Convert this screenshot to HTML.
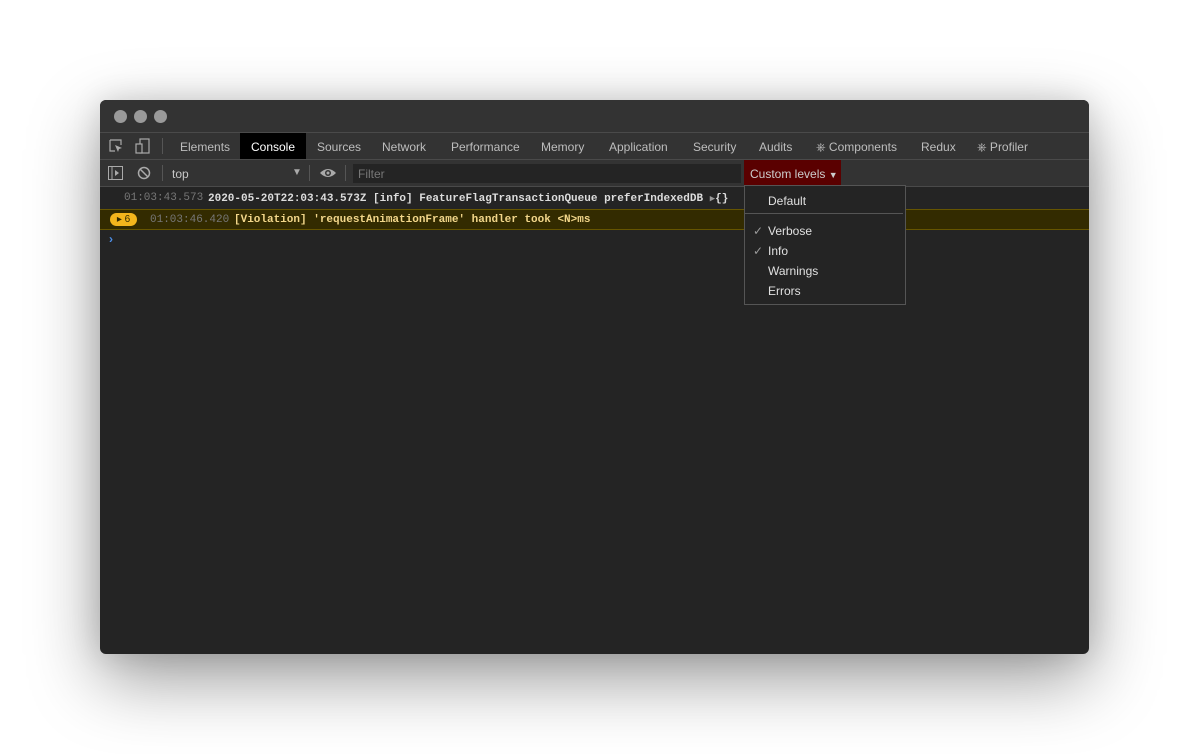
<!DOCTYPE html>
<html><head><style>
body{margin:0;width:1189px;height:754px;background:#fff;overflow:hidden;font-family:"Liberation Sans",sans-serif;}
.win{position:absolute;left:100px;top:100px;width:989px;height:554px;background:#242424;border-radius:6px;overflow:hidden;box-shadow:0 25px 70px rgba(0,0,0,.4),0 0 30px rgba(0,0,0,.12);}
.title{height:32px;background:#333;position:relative;border-bottom:1px solid #4a4a4a}
.dot{position:absolute;top:10px;width:13px;height:13px;border-radius:50%;background:#9a9a9a}
.tabs{height:26px;background:#333;border-bottom:1px solid #4a4a4a;position:relative;font-size:12px;color:#bdbdbd}
.tab{position:absolute;top:1px;height:26px;line-height:26px}
.tb{height:26px;background:#333;border-bottom:1px solid #4a4a4a;position:relative;font-size:12px;color:#c8c8c8}
.mono{font-family:"Liberation Mono",monospace;font-size:11px;position:absolute;white-space:pre}
.menu{position:absolute;left:644px;top:85px;width:160px;height:118px;background:#242424;border:1px solid #555;font-size:12px;color:#e0e0e0}
.menu div{position:absolute;left:23px}
.ck{position:absolute;left:8px!important;color:#999}
</style></head><body>
<div class="win">
 <div class="title"><div class="dot" style="left:14px"></div><div class="dot" style="left:34px"></div><div class="dot" style="left:54px"></div></div>
 <div class="tabs">
  <svg style="position:absolute;left:9px;top:6px" width="14" height="14"><path d="M1 1h11v5M1 1v11h5" stroke="#aaa" fill="none" stroke-width="1.2"/><path d="M6 6l7 3-3 1-1 3z" fill="#aaa"/></svg>
  <svg style="position:absolute;left:35px;top:5px" width="16" height="16"><rect x="5" y="1" width="9" height="14" stroke="#aaa" fill="none" stroke-width="1.2"/><rect x="1" y="6" width="6" height="9" stroke="#aaa" fill="#333" stroke-width="1.2"/></svg>
  <div style="position:absolute;left:62px;top:5px;width:1px;height:16px;background:#555"></div>
  <div class="tab" style="left:80px">Elements</div>
  <div class="tab" style="left:140px;top:0;width:66px;background:#000;color:#fff;text-align:center;line-height:28px">Console</div>
  <div class="tab" style="left:217px">Sources</div>
  <div class="tab" style="left:282px">Network</div>
  <div class="tab" style="left:351px">Performance</div>
  <div class="tab" style="left:441px">Memory</div>
  <div class="tab" style="left:509px">Application</div>
  <div class="tab" style="left:593px">Security</div>
  <div class="tab" style="left:659px">Audits</div>
  <div class="tab" style="left:716px">⎈ Components</div>
  <div class="tab" style="left:821px">Redux</div>
  <div class="tab" style="left:877px">⎈ Profiler</div>
 </div>
 <div class="tb">
  <svg style="position:absolute;left:8px;top:6px" width="15" height="14"><rect x=".5" y=".5" width="14" height="13" stroke="#aaa" fill="none"/><path d="M4 1v12" stroke="#aaa"/><path d="M7 4l4 3-4 3z" fill="#aaa"/></svg>
  <svg style="position:absolute;left:37px;top:6px" width="14" height="14"><circle cx="7" cy="7" r="5.5" stroke="#aaa" fill="none" stroke-width="1.5"/><path d="M3 3l8 8" stroke="#aaa" stroke-width="1.5"/></svg>
  <div style="position:absolute;left:62px;top:5px;width:1px;height:16px;background:#555"></div>
  <div style="position:absolute;left:72px;top:7px">top</div>
  <div style="position:absolute;left:192px;top:7px;font-size:10px;color:#aaa">▼</div>
  <div style="position:absolute;left:209px;top:5px;width:1px;height:16px;background:#555"></div>
  <svg style="position:absolute;left:219px;top:7px" width="18" height="12"><path d="M1 6Q9-2 17 6Q9 14 1 6z" fill="#aaa"/><circle cx="9" cy="6" r="3" fill="#333"/><circle cx="9" cy="6" r="1.5" fill="#aaa"/></svg>
  <div style="position:absolute;left:245px;top:5px;width:1px;height:16px;background:#555"></div>
  <div style="position:absolute;left:253px;top:4px;width:388px;height:19px;background:#242424;color:#777;line-height:21px;padding-left:5px;box-sizing:border-box">Filter</div>
  <div style="position:absolute;left:644px;top:0;width:97px;height:26px;background:#5a0000;color:#ccc;line-height:28px;padding-left:6px;box-sizing:border-box">Custom levels <span style="font-size:9px">▼</span></div>
 </div>
 <div class="mono" style="left:24px;top:92px;color:#777">01:03:43.573</div>
 <div class="mono" style="left:108px;top:93px;color:#ddd;font-weight:bold">2020-05-20T22:03:43.573Z [info] FeatureFlagTransactionQueue preferIndexedDB <span style="color:#999;font-size:9px">▶</span>{}</div>
 <div style="position:absolute;left:0;top:109px;width:989px;height:19px;background:#332b00;border-top:1px solid #665500;border-bottom:1px solid #665500"></div>
 <div style="position:absolute;left:10px;top:113px;width:27px;height:13px;border-radius:7px;background:#f3b51c;font-size:10px;line-height:13px;text-align:center;color:#332b00;font-family:'Liberation Sans'">▸ 6</div>
 <div class="mono" style="left:50px;top:114px;color:#777">01:03:46.420</div>
 <div class="mono" style="left:134px;top:114px;color:#f2d68a;font-weight:bold">[Violation] 'requestAnimationFrame' handler took &lt;N&gt;ms</div>
 <div style="position:absolute;left:9px;top:132px;color:#4d8fe8;font-size:12px;font-weight:bold">›</div>
 <div class="menu">
  <div style="top:8px">Default</div>
  <div style="left:0!important;top:27px;width:158px;height:1px;background:#555"></div>
  <span class="ck" style="position:absolute;top:38px;left:8px">✓</span><div style="top:38px">Verbose</div>
  <span class="ck" style="position:absolute;top:58px;left:8px">✓</span><div style="top:58px">Info</div>
  <div style="top:78px">Warnings</div>
  <div style="top:98px">Errors</div>
 </div>
</div>
</body></html>
